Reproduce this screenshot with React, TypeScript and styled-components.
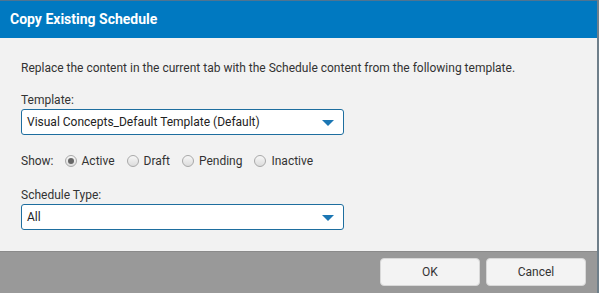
import React, { ReactElement } from 'react'
import styled, { createGlobalStyle } from 'styled-components'

const GlobalStyle = createGlobalStyle`
    html, body {
        margin: 0;
        padding: 0;
        background: #ffffff;
    }
    body {
        font-family: Roboto, "Liberation Sans", Arial, sans-serif;
    }
`

interface RadioProps {
    checked: boolean;
}

const Dialog = styled.div`
    width: 597px;
    height: 293px;
    display: flex;
    flex-direction: column;
    border-right: 2px solid #6f7f8a;
    background-color: #f2f2f2;
`
const Header = styled.div`
    height: 38px;
    box-sizing: border-box;
    border-top: 1px solid #4f7491;
    background-color: #0079c1;
    display: flex;
    align-items: center;
    padding: 0 10px 1px;
    color: #ffffff;
    font-size: 14px;
    font-weight: 700;
`
const Body = styled.div`
    flex: 1;
    padding: 23px 21px 0;
    color: #333333;
    font-size: 12px;
`
const Intro = styled.div`
    line-height: 15px;
    margin-bottom: 17px;
`
const Field = styled.div`
    display: flex;
    flex-direction: column;
    gap: 2px;
`
const Label = styled.div`
    line-height: 14px;
`
const Select = styled.div`
    width: 323px;
    height: 26px;
    box-sizing: border-box;
    border: 1px solid #1e6e9f;
    border-radius: 3px;
    background-color: #ffffff;
    display: flex;
    align-items: center;
    justify-content: space-between;
    padding: 0 9px 0 5px;
    font-size: 12px;
    color: #222222;
`
const Caret = styled.span`
    width: 0;
    height: 0;
    margin-top: 1px;
    border-left: 6px solid transparent;
    border-right: 6px solid transparent;
    border-top: 6px solid #1b76b3;
`
const ShowRow = styled.div`
    display: flex;
    align-items: center;
    height: 16px;
    margin: 18px 0 19px;
`
const ShowLabel = styled.span`
    margin-right: 11px;
`
const RadioItem = styled.label`
    display: flex;
    align-items: center;
    gap: 5px;
    margin-right: 12px;
`
const RadioCircle = styled.span<RadioProps>`
    width: 12px;
    height: 12px;
    box-sizing: border-box;
    border-radius: 50%;
    border: 1px solid #a9a9a9;
    background: linear-gradient(#f7f7f7, #dcdcdc);
    display: flex;
    align-items: center;
    justify-content: center;
    &::after {
        content: '';
        width: 6px;
        height: 6px;
        border-radius: 50%;
        background-color: #666666;
        display: ${(props: RadioProps): string => props.checked ? 'block' : 'none'};
    }
`
const Footer = styled.div`
    height: 42px;
    box-sizing: border-box;
    background-color: #999999;
    border-top: 1px solid #8a8a8a;
    display: flex;
    justify-content: flex-end;
    align-items: flex-start;
    gap: 6px;
    padding: 6px 11px 0 0;
`
const Button = styled.button`
    width: 100px;
    height: 28px;
    border: 1px solid #d8d8d8;
    border-radius: 4px;
    background-color: #f3f3f3;
    color: #333333;
    font-family: Roboto, "Liberation Sans", Arial, sans-serif;
    font-size: 12px;
    padding: 0;
`

const showOptions = ['Active', 'Draft', 'Pending', 'Inactive']

export default function App(): ReactElement {
    return (
        <>
            <GlobalStyle />
            <Dialog>
                <Header>Copy Existing Schedule</Header>
                <Body>
                    <Intro>Replace the content in the current tab with the Schedule content from the following template.</Intro>
                    <Field>
                        <Label>Template:</Label>
                        <Select>
                            <span>Visual Concepts_Default Template (Default)</span>
                            <Caret />
                        </Select>
                    </Field>
                    <ShowRow>
                        <ShowLabel>Show:</ShowLabel>
                        {showOptions.map((opt, i): JSX.Element => (
                            <RadioItem key={opt}>
                                <RadioCircle checked={i === 0} />
                                {opt}
                            </RadioItem>
                        ))}
                    </ShowRow>
                    <Field>
                        <Label>Schedule Type:</Label>
                        <Select>
                            <span>All</span>
                            <Caret />
                        </Select>
                    </Field>
                </Body>
                <Footer>
                    <Button>OK</Button>
                    <Button>Cancel</Button>
                </Footer>
            </Dialog>
        </>
    )
}
